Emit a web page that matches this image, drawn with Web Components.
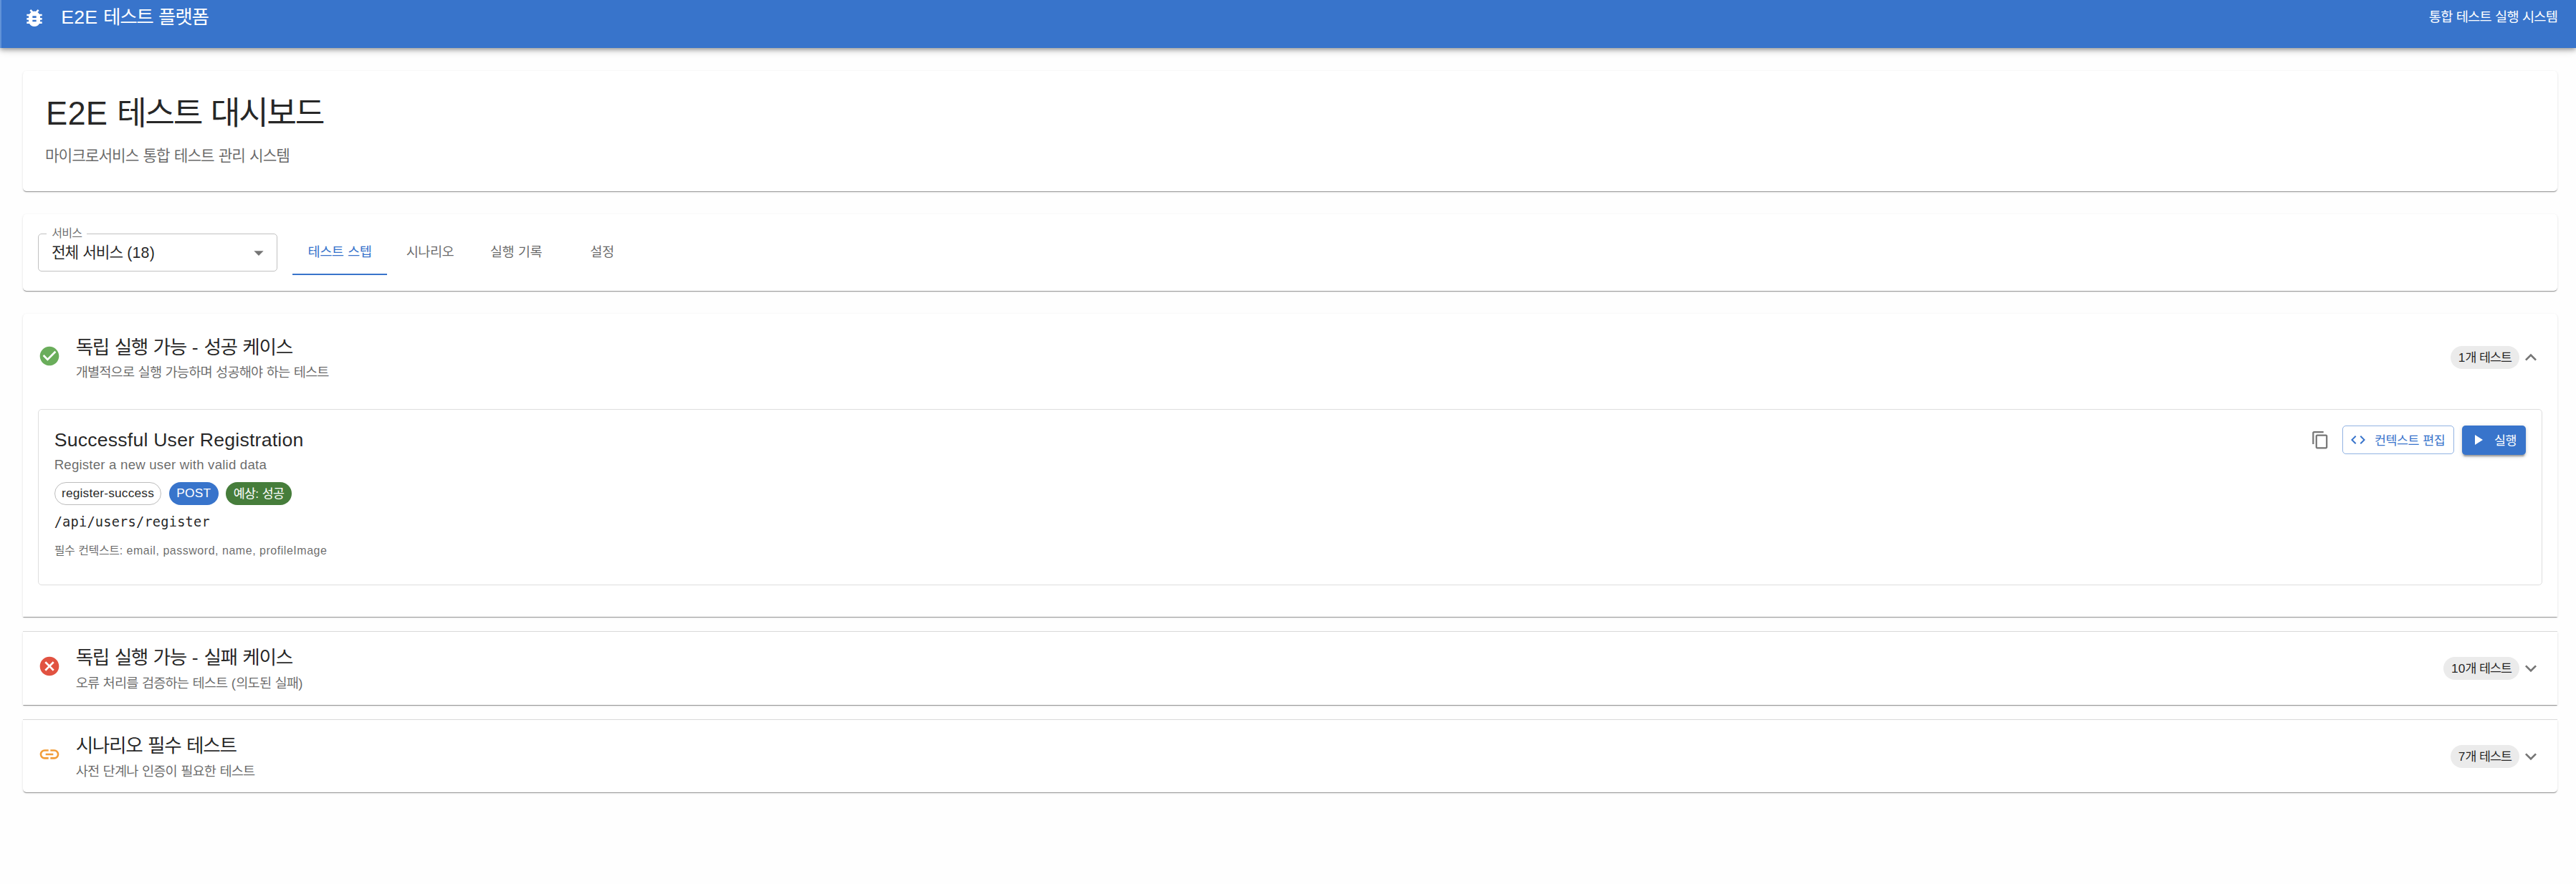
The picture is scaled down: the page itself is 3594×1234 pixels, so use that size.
<!DOCTYPE html>
<html lang="ko">
<head>
<meta charset="UTF-8">
<title>E2E 테스트 플랫폼</title>
<style>
  html { font-size: 21.3333px; }
  body {
    margin: 0;
    min-height: 100vh;
    background: #fefefe;
    color: rgba(0, 0, 0, 0.87);
    font-family: "Liberation Sans", "Noto Sans CJK KR", sans-serif;
  }
  main {
    display: flex;
    flex-direction: column;
    gap: 32px;
    padding: 32px 26px 0 32px;
  }
  .groups { display: flex; flex-direction: column; gap: 21px; }
</style>
</head>
<body>
  <app-bar>
    E2E <ko-text>테스트 플랫폼</ko-text>
    <ko-text slot="end">통합 테스트 실행 시스템</ko-text>
  </app-bar>

  <main>
    <page-header>
      E2E <ko-text>테스트 대시보드</ko-text>
      <ko-text slot="description">마이크로서비스 통합 테스트 관리 시스템</ko-text>
    </page-header>

    <tool-bar>
      <service-select>
        <ko-text slot="label">서비스</ko-text>
        <ko-text>전체 서비스</ko-text> (18)
      </service-select>
      <tab-bar>
        <tab-item selected><ko-text>테스트 스텝</ko-text></tab-item>
        <tab-item><ko-text>시나리오</ko-text></tab-item>
        <tab-item><ko-text>실행 기록</ko-text></tab-item>
        <tab-item><ko-text>설정</ko-text></tab-item>
      </tab-bar>
    </tool-bar>

    <div class="groups">
      <test-group icon="check" color="#6aad5b" expanded>
        <span slot="title"><ko-text>독립 실행 가능</ko-text> - <ko-text>성공 케이스</ko-text></span>
        <ko-text slot="description">개별적으로 실행 가능하며 성공해야 하는 테스트</ko-text>
        <span slot="count">1<ko-text>개 테스트</ko-text></span>
        <test-step>
          <span slot="title">Successful User Registration</span>
          <span slot="description">Register a new user with valid data</span>
          <chip-label slot="chips" variant="outlined">register-success</chip-label>
          <chip-label slot="chips" variant="primary">POST</chip-label>
          <chip-label slot="chips" variant="success"><ko-text>예상</ko-text>: <ko-text>성공</ko-text></chip-label>
          <span slot="path">/api/users/register</span>
          <span slot="context"><ko-text>필수 컨텍스트</ko-text>: email, password, name, profileImage</span>
        </test-step>
      </test-group>

      <test-group icon="cancel" color="#e15241">
        <span slot="title"><ko-text>독립 실행 가능</ko-text> - <ko-text>실패 케이스</ko-text></span>
        <span slot="description"><ko-text>오류 처리를 검증하는 테스트</ko-text> (<ko-text>의도된 실패</ko-text>)</span>
        <span slot="count">10<ko-text>개 테스트</ko-text></span>
      </test-group>

      <test-group icon="link" color="#f29d38">
        <ko-text slot="title">시나리오 필수 테스트</ko-text>
        <ko-text slot="description">사전 단계나 인증이 필요한 테스트</ko-text>
        <span slot="count">7<ko-text>개 테스트</ko-text></span>
      </test-group>
    </div>
  </main>

<script>
  const ICONS = {
    bug: "M20 8h-2.81c-.45-.78-1.07-1.45-1.82-1.96L17 4.41 15.59 3l-2.17 2.17C12.96 5.06 12.49 5 12 5s-.96.06-1.41.17L8.41 3 7 4.41l1.62 1.63C7.88 6.55 7.26 7.22 6.81 8H4v2h2.09c-.05.33-.09.66-.09 1v1H4v2h2v1c0 .34.04.67.09 1H4v2h2.81c1.04 1.79 2.97 3 5.19 3s4.15-1.21 5.19-3H20v-2h-2.09c.05-.33.09-.66.09-1v-1h2v-2h-2v-1c0-.34-.04-.67-.09-1H20V8zm-6 8h-4v-2h4v2zm0-4h-4v-2h4v2z",
    dropdown: "M7 10l5 5 5-5z",
    check: "M12 2C6.48 2 2 6.48 2 12s4.48 10 10 10 10-4.48 10-10S17.52 2 12 2zm-2 15l-5-5 1.41-1.41L10 14.17l7.59-7.59L19 8l-9 9z",
    cancel: "M12 2C6.47 2 2 6.47 2 12s4.47 10 10 10 10-4.47 10-10S17.53 2 12 2zm5 13.59L15.59 17 12 13.41 8.41 17 7 15.59 10.59 12 7 8.41 8.41 7 12 10.59 15.59 7 17 8.41 13.41 12 17 15.59z",
    link: "M3.9 12c0-1.71 1.39-3.1 3.1-3.1h4V7H7c-2.76 0-5 2.24-5 5s2.24 5 5 5h4v-1.9H7c-1.71 0-3.1-1.39-3.1-3.1zM8 13h8v-2H8v2zm9-6h-4v1.9h4c1.71 0 3.1 1.39 3.1 3.1s-1.39 3.1-3.1 3.1h-4V17h4c2.76 0 5-2.24 5-5s-2.24-5-5-5z",
    expand: "M16.59 8.59L12 13.17 7.41 8.59 6 10l6 6 6-6z",
    copy: "M16 1H4c-1.1 0-2 .9-2 2v14h2V3h12V1zm3 4H8c-1.1 0-2 .9-2 2v14c0 1.1.9 2 2 2h11c1.1 0 2-.9 2-2V7c0-1.1-.9-2-2-2zm0 16H8V7h11v14z",
    code: "M9.4 16.6L4.8 12l4.6-4.6L8 6l-6 6 6 6 1.4-1.4zm5.2 0l4.6-4.6-4.6-4.6L16 6l6 6-6 6-1.4-1.4z",
    play: "M8 5v14l11-7z",
  };

  const PAPER = `
    background: #fff;
    box-shadow: 0 2px 1px -1px rgba(0, 0, 0, 0.2),
      0 1px 0 0 rgba(0, 0, 0, 0.18),
      0 1px 3px 0 rgba(0, 0, 0, 0.14);
  `;

  class BaseElement extends HTMLElement {
    connectedCallback() {
      if (this.shadowRoot) return;
      this.attachShadow({ mode: "open" });
      this.shadowRoot.innerHTML = `<style>*, :host { box-sizing: border-box; }</style>${this.render().trim()}`;
    }
  }

  // Hangul glyphs are set a little tighter than the font's own advance.
  // Kept free of white space in the markup, it would show up between the words.
  class KoText extends BaseElement {
    render() {
      return `<style>
          :host {
            letter-spacing: calc(var(--track, 0em) - 0.056em);
            word-spacing: 0.053em;
          }
        </style><slot></slot>`;
    }
  }

  class AppIcon extends BaseElement {
    render() {
      return `
        <style>
          :host { display: block; flex: none; width: 1.5rem; height: 1.5rem; }
          svg { display: block; width: 100%; height: 100%; fill: currentColor; }
        </style>
        <svg viewBox="0 0 24 24"><path d="${ICONS[this.getAttribute("name")]}"/></svg>
      `;
    }
  }

  class AppBar extends BaseElement {
    render() {
      return `
        <style>
          :host {
            display: flex;
            align-items: center;
            height: 85px;
            margin-top: -18px;
            padding: 0 26px 0 30px;
            border-left: 2px solid #6192d7;
            background: #3874cb;
            color: #fff;
            box-shadow: 0 2.67px 5.33px -1.33px rgba(0, 0, 0, 0.25),
              0 5.33px 6.67px 0 rgba(0, 0, 0, 0.16),
              0 1.33px 13.3px 0 rgba(0, 0, 0, 0.14);
          }
          .title {
            --track: 0.0075em;
            flex: 1;
            margin-left: 1rem;
            font-size: 1.25rem;
            line-height: 1.6;
            letter-spacing: var(--track);
          }
          .end {
            --track: 0.01071em;
            font-size: 0.875rem;
            line-height: 1.43;
            letter-spacing: var(--track);
          }
        </style>
        <app-icon name="bug"></app-icon>
        <div class="title"><slot></slot></div>
        <div class="end"><slot name="end"></slot></div>
      `;
    }
  }

  class PageHeader extends BaseElement {
    render() {
      return `
        <style>
          :host { display: block; height: 168px; padding: 1.5rem; border-radius: 5px; ${PAPER} }
          h1 {
            --track: 0.004em;
            margin: 0 0 0.35em;
            font-size: 2.125rem;
            font-weight: 400;
            line-height: 1.235;
            letter-spacing: var(--track);
          }
          p {
            --track: 0.00938em;
            margin: 0 0 0 -1px;
            color: rgba(0, 0, 0, 0.6);
            font-size: 1rem;
            line-height: 1.5;
            letter-spacing: var(--track);
          }
        </style>
        <h1><slot></slot></h1>
        <p><slot name="description"></slot></p>
      `;
    }
  }

  class ToolBar extends BaseElement {
    render() {
      return `
        <style>
          :host {
            display: flex;
            align-items: flex-start;
            gap: 1rem;
            height: 107px;
            padding: 21px 1rem 0;
            border-radius: 5px;
            ${PAPER}
          }
        </style>
        <slot></slot>
      `;
    }
  }

  class ServiceSelect extends BaseElement {
    render() {
      return `
        <style>
          :host {
            position: relative;
            display: flex;
            align-items: center;
            width: 333.3px;
            height: 53px;
            margin-top: 6px;
            padding: 0 8.3px 0 17.6px;
            border: 1px solid #c1c1c1;
            border-radius: 5px;
          }
          .label {
            --track: 0.00938em;
            position: absolute;
            top: -12px;
            left: 11px;
            padding: 0 7px;
            background: #fff;
            color: rgba(0, 0, 0, 0.6);
            font-size: 16px;
            line-height: 21px;
            letter-spacing: var(--track);
          }
          .value {
            --track: 0.00938em;
            flex: 1;
            padding-bottom: 5px;
            font-size: 1rem;
            letter-spacing: var(--track);
          }
          app-icon { color: rgba(0, 0, 0, 0.54); }
        </style>
        <span class="label"><slot name="label"></slot></span>
        <span class="value"><slot></slot></span>
        <app-icon name="dropdown"></app-icon>
      `;
    }
  }

  class TabBar extends BaseElement {
    render() {
      return `
        <style>:host { display: flex; height: 64px; }</style>
        <slot></slot>
      `;
    }
  }

  class TabItem extends BaseElement {
    render() {
      return `
        <style>
          :host {
            --track: 0.02857em;
            display: flex;
            align-items: center;
            justify-content: center;
            min-width: 120px;
            padding: 0 1rem 5px;
            color: rgba(0, 0, 0, 0.6);
            font-size: 0.875rem;
            letter-spacing: var(--track);
          }
          :host([selected]) {
            min-width: 132px;
            color: #3874cb;
            box-shadow: inset 0 -2px #3874cb;
          }
        </style>
        <slot></slot>
      `;
    }
  }

  class ChipLabel extends BaseElement {
    render() {
      return `
        <style>
          :host {
            --track: 0em;
            display: inline-flex;
            align-items: center;
            height: 32px;
            padding: 0 10.67px 3px;
            border-radius: 16px;
            background: #ebebeb;
            font-size: 0.8125rem;
            white-space: nowrap;
            letter-spacing: 0;
          }
          :host([variant="outlined"]) {
            padding: 0 9.3px 1px;
            border: 1px solid #bdbdbd;
            background: none;
            letter-spacing: 0.01071em;
          }
          :host([variant="primary"]) {
            padding: 0 10.67px 1px;
            background: #3874cb;
            color: #fff;
            letter-spacing: 0.01071em;
          }
          :host([variant="success"]) { --track: 0.01071em; background: #467d3b; color: #fff; }
        </style>
        <span><slot></slot></span>
      `;
    }
  }

  class TestGroup extends BaseElement {
    render() {
      return `
        <style>
          :host { position: relative; display: block; height: 102px; ${PAPER} }
          :host([expanded]) { height: 423px; }
          :host(:first-child) { border-radius: 5px 5px 0 0; }
          :host(:last-child) { height: 101px; border-radius: 0 0 5px 5px; }
          /* divider drawn just above every group but the first */
          :host(:not(:first-child))::before {
            content: "";
            position: absolute;
            top: -1px;
            left: 0;
            right: 0;
            height: 1px;
            background: #d9d9d9;
          }
          .summary {
            display: flex;
            align-items: center;
            padding: 16px 1rem;
          }
          :host([expanded]) .summary { padding: 26.67px 1rem; }
          .status { margin: 0 1rem 5px 0; color: ${this.getAttribute("color")}; }
          .text { flex: 1; margin-left: -1px; }
          .title {
            --track: 0.0075em;
            margin: -1px 0 1px;
            font-size: 1.25rem;
            line-height: 42.67px;
            letter-spacing: var(--track);
          }
          .description {
            --track: 0.01071em;
            color: rgba(0, 0, 0, 0.6);
            font-size: 0.875rem;
            line-height: 26.67px;
            letter-spacing: var(--track);
          }
          .chevron { color: rgba(0, 0, 0, 0.54); }
          :host([expanded]) .chevron { transform: rotate(180deg); }
          .details { display: none; padding: 0.5rem 1rem 0; }
          :host([expanded]) .details { display: block; }
        </style>
        <div class="summary">
          <app-icon class="status" name="${this.getAttribute("icon")}"></app-icon>
          <div class="text">
            <div class="title"><slot name="title"></slot></div>
            <div class="description"><slot name="description"></slot></div>
          </div>
          <chip-label><slot name="count"></slot></chip-label>
          <app-icon class="chevron" name="expand"></app-icon>
        </div>
        <div class="details"><slot></slot></div>
      `;
    }
  }

  class ActionButton extends BaseElement {
    render() {
      return `
        <style>
          :host {
            --track: 0.02857em;
            display: flex;
            align-items: center;
            gap: 0.5rem;
            height: 41px;
            padding: 0 13.3px 0 10.67px;
            border-radius: 5px;
            background: #3874cb;
            color: #fff;
            font-size: 0.8125rem;
            letter-spacing: var(--track);
            box-shadow: 0 4px 1.33px -2.67px rgba(0, 0, 0, 0.2),
              0 2.67px 2.67px 0 rgba(0, 0, 0, 0.14),
              0 1.33px 6.67px 0 rgba(0, 0, 0, 0.12);
          }
          :host([variant="outlined"]) {
            height: 40px;
            padding: 0 12px 0 9px;
            border: 1px solid rgba(56, 116, 203, 0.55);
            background: none;
            color: #3874cb;
            box-shadow: none;
          }
          app-icon { width: 24px; height: 24px; }
          span { padding-bottom: 2px; }
        </style>
        <app-icon name="${this.getAttribute("icon")}"></app-icon>
        <span><slot></slot></span>
      `;
    }
  }

  class TestStep extends BaseElement {
    render() {
      return `
        <style>
          :host {
            display: flex;
            align-items: flex-start;
            height: 246px;
            padding: 1rem;
            border: 1px solid #dedede;
            border-radius: 5px;
          }
          .info { flex: 1; }
          .title {
            --track: 0.0075em;
            margin: -1px 0 1px;
            font-size: 1.25rem;
            line-height: 42.67px;
            letter-spacing: var(--track);
          }
          .description, .path {
            font-size: 0.875rem;
            line-height: 26.67px;
            letter-spacing: 0.01071em;
          }
          .description { color: rgba(0, 0, 0, 0.6); }
          .chips { display: flex; gap: 10.3px; margin: 10px 0 10.67px; }
          .path { font-family: "DejaVu Sans Mono", monospace; }
          .context {
            --track: 0.03333em;
            margin-top: 14px;
            color: rgba(0, 0, 0, 0.6);
            font-size: 0.75rem;
            line-height: 26.67px;
            letter-spacing: var(--track);
          }
          .actions { display: flex; align-items: center; gap: 0.5rem; }
          .copy { width: 26.67px; height: 26.67px; margin: 0 6.67px; color: rgba(0, 0, 0, 0.54); }
        </style>
        <div class="info">
          <div class="title"><slot name="title"></slot></div>
          <div class="description"><slot name="description"></slot></div>
          <div class="chips"><slot name="chips"></slot></div>
          <div class="path"><slot name="path"></slot></div>
          <div class="context"><slot name="context"></slot></div>
        </div>
        <div class="actions">
          <app-icon class="copy" name="copy"></app-icon>
          <action-button icon="code" variant="outlined"><ko-text>컨텍스트 편집</ko-text></action-button>
          <action-button icon="play"><ko-text>실행</ko-text></action-button>
        </div>
      `;
    }
  }

  customElements.define("ko-text", KoText);
  customElements.define("app-icon", AppIcon);
  customElements.define("app-bar", AppBar);
  customElements.define("page-header", PageHeader);
  customElements.define("tool-bar", ToolBar);
  customElements.define("service-select", ServiceSelect);
  customElements.define("tab-bar", TabBar);
  customElements.define("tab-item", TabItem);
  customElements.define("chip-label", ChipLabel);
  customElements.define("test-group", TestGroup);
  customElements.define("action-button", ActionButton);
  customElements.define("test-step", TestStep);
</script>
</body>
</html>
